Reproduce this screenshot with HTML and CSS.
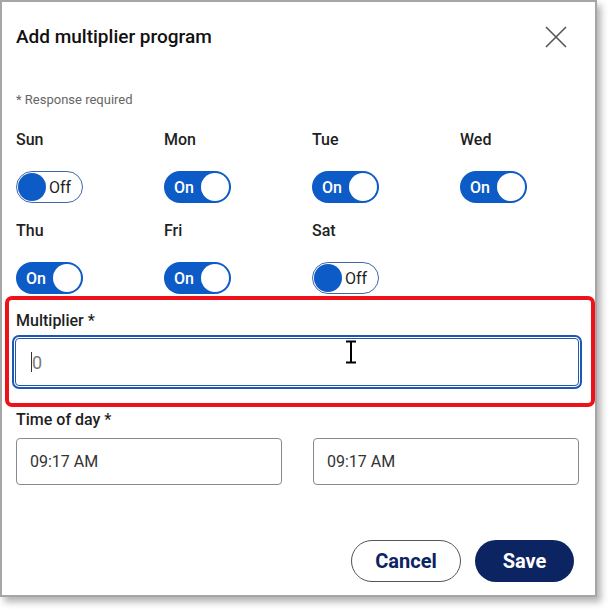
FILE: index.html
```html
<html>
    <head>
        <title>Add multiplier program</title>
        <link rel="stylesheet" href="styles.css">
    </head>
    <body>
        <div class="dialog">
            <div class="dialog-head">
                <h2>Add multiplier program</h2>
                <a class="closebtn" href="javascript:void(0)">
                    <svg width="22" height="22" viewBox="0 0 22 22">
                        <path d="M1 1 L21 21 M21 1 L1 21" stroke="#555" stroke-width="1.6" fill="none"/>
                    </svg>
                </a>
            </div>

            <p class="required-note">* Response required</p>

            <div class="days">
                <div class="day">
                    <span class="day-name">Sun</span>
                    <span class="toggle off"><span class="knob"></span><span class="toggle-text">Off</span></span>
                </div>
                <div class="day">
                    <span class="day-name">Mon</span>
                    <span class="toggle on"><span class="toggle-text">On</span><span class="knob"></span></span>
                </div>
                <div class="day">
                    <span class="day-name">Tue</span>
                    <span class="toggle on"><span class="toggle-text">On</span><span class="knob"></span></span>
                </div>
                <div class="day">
                    <span class="day-name">Wed</span>
                    <span class="toggle on"><span class="toggle-text">On</span><span class="knob"></span></span>
                </div>
                <div class="day">
                    <span class="day-name">Thu</span>
                    <span class="toggle on"><span class="toggle-text">On</span><span class="knob"></span></span>
                </div>
                <div class="day">
                    <span class="day-name">Fri</span>
                    <span class="toggle on"><span class="toggle-text">On</span><span class="knob"></span></span>
                </div>
                <div class="day">
                    <span class="day-name">Sat</span>
                    <span class="toggle off"><span class="knob"></span><span class="toggle-text">Off</span></span>
                </div>
            </div>

            <div class="callout">
                <label class="field-label">Multiplier *</label>
                <div class="text-input focused">
                    <span class="caret"></span><span class="placeholder">0</span>
                    <!-- mouse pointer over the field -->
                    <svg class="ibeam" width="14" height="24" viewBox="0 0 14 24">
                        <path d="M2 1.5 H12 M7 1.5 V22.5 M2 22.5 H12" stroke="#000" stroke-width="2" fill="none"/>
                    </svg>
                </div>
            </div>

            <div class="field">
                <label class="field-label">Time of day *</label>
                <div class="times">
                    <div class="text-input time">09:17 AM</div>
                    <div class="text-input time">09:17 AM</div>
                </div>
            </div>

            <div class="actions">
                <button class="button cancel">Cancel</button>
                <button class="button save">Save</button>
            </div>
        </div>
    </body>
</html>
```

FILE: styles.css
```css
body {
    margin: 0;
    background-color: white;
    font-family: Roboto, "Liberation Sans", sans-serif;
    color: #1f1f1f;
}

.dialog {
    width: 597px;
    box-sizing: border-box;
    border: 2px solid #a6a6a6;
    background-color: white;
    box-shadow: 4px 5px 7px rgba(0, 0, 0, 0.3);
    padding-bottom: 13px;
}

/* Title row */
.dialog-head {
    display: flex;
    justify-content: space-between;
    align-items: center;
    padding: 23px 28px 0 14px;
}

.dialog-head h2 {
    margin: 0;
    font-size: 19px;
    line-height: 24px;
    font-weight: 500;
    color: #111;
}

.closebtn {
    display: flex;
}

.required-note {
    margin: 43px 0 0 0;
    padding-left: 14px;
    font-size: 13px;
    line-height: 16px;
    color: #666;
}

/* Day switches */
.days {
    display: grid;
    grid-template-columns: repeat(4, 148px);
    row-gap: 18px;
    margin-top: 22px;
    padding-left: 14px;
}

.day {
    display: flex;
    flex-direction: column;
    align-items: flex-start;
    gap: 21px;
}

.day-name {
    font-size: 16px;
    line-height: 20px;
    font-weight: 500;
}

.toggle {
    display: flex;
    align-items: center;
    box-sizing: border-box;
    width: 67px;
    height: 32px;
    border-radius: 16px;
    padding: 0 2px;
    font-size: 16px;
}

.toggle .knob {
    width: 28px;
    height: 28px;
    border-radius: 50%;
}

.toggle.on {
    background-color: #0d5bc6;
    color: white;
    font-weight: 500;
    justify-content: space-between;
    padding-left: 10px;
}

.toggle.on .knob {
    background-color: white;
}

.toggle.off {
    background-color: white;
    border: 1px solid #3f67a8;
    color: #1f1f1f;
    padding-left: 1px;
    gap: 3px;
}

.toggle.off .knob {
    background-color: #0d5bc6;
}

/* Red box round the multiplier field */
.callout {
    margin: 2px 0 0 3px;
    border: 4px solid #ee1119;
    border-radius: 7px;
    padding: 11px 12px 17px 6px;
}

.callout .field-label {
    padding-left: 1px;
}

.field-label {
    display: block;
    font-size: 16px;
    line-height: 20px;
    font-weight: 500;
}

.text-input {
    display: flex;
    align-items: center;
    box-sizing: border-box;
    border: 1px solid #8a8a8a;
    border-radius: 4px;
    font-size: 16px;
    color: #333;
}

.text-input.focused {
    position: relative;
    height: 48px;
    margin-top: 7px;
    padding-left: 15px;
    border-color: #1d57b0;
    outline: 2px solid #1d57b0;
    outline-offset: 1px;
    font-size: 18px;
}

.caret {
    width: 1px;
    height: 20px;
    background-color: #333;
}

.placeholder {
    color: #7a7a7a;
}

.ibeam {
    position: absolute;
    left: 328px;
    top: 1px;
}

.field {
    padding: 3px 16px 0 14px;
}

.times {
    display: grid;
    grid-template-columns: 1fr 1fr;
    column-gap: 31px;
    margin-top: 8px;
}

.text-input.time {
    height: 47px;
    padding-left: 13px;
}

/* Footer buttons */
.actions {
    display: flex;
    justify-content: flex-end;
    gap: 14px;
    margin-top: 55px;
    padding-right: 21px;
}

.button {
    height: 42px;
    border-radius: 21px;
    font-family: Roboto, "Liberation Sans", sans-serif;
    font-size: 20px;
    font-weight: bold;
}

.cancel {
    width: 110px;
    background-color: white;
    border: 1px solid #555;
    color: #0c2461;
}

.save {
    width: 99px;
    background-color: #0c2461;
    border: none;
    color: white;
}
```
